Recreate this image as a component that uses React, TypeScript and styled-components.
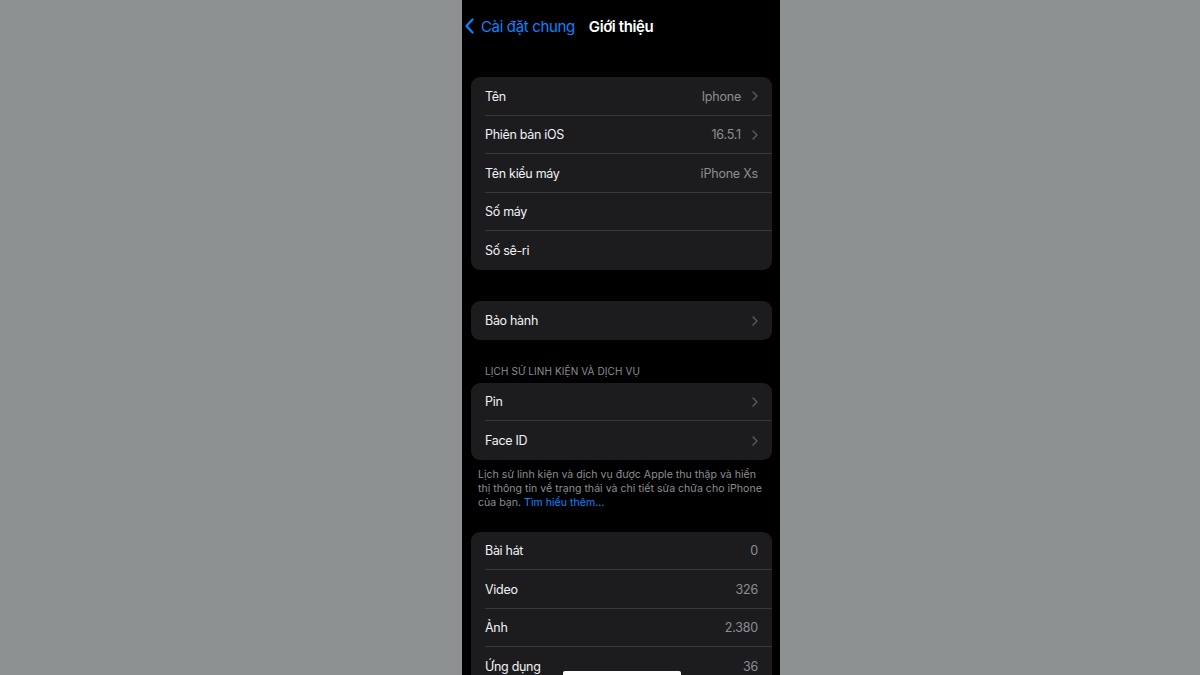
import React from "react";
import styled, { createGlobalStyle } from "styled-components";

interface Row {
    label: string;
    value?: string;
    chevron?: boolean;
}

const GlobalStyle = createGlobalStyle`
    html, body {
        margin: 0;
        padding: 0;
        background: #8e9192;
        font-family: Inter, "Noto Sans", "DejaVu Sans", sans-serif;
        -webkit-font-smoothing: antialiased;
    }
`;

const Page = styled.div`
    width: 1200px;
    height: 675px;
    display: flex;
    padding-left: 462px;
    box-sizing: border-box;
    overflow: hidden;
`;

const Screen = styled.div`
    position: relative;
    width: 318px;
    height: 675px;
    background: #000;
    display: flex;
    flex-direction: column;
    padding: 0 8px 0 9px;
    box-sizing: border-box;
    overflow: hidden;

    & > * {
        flex-shrink: 0;
    }
`;

const NavBar = styled.div`
    height: 52px;
    display: flex;
    align-items: center;
    margin-left: -6px;
    margin-bottom: 25px;
`;

const BackButton = styled.div`
    display: flex;
    align-items: center;
    gap: 7px;
    color: #0a84ff;
    font-size: 15px;
    letter-spacing: -0.35px;

    svg {
        width: 9px;
        height: 16px;
    }
`;

const NavTitle = styled.div`
    margin-left: 14px;
    color: #fff;
    font-size: 15px;
    font-weight: 600;
    letter-spacing: -0.4px;
`;

const Card = styled.div`
    background: #1c1c1e;
    border-radius: 9px;
`;

const RowItem = styled.div<{ $last?: boolean }>`
    height: 38.5px;
    display: flex;
    align-items: center;
    margin-left: 14px;
    padding: 1px 14px 0 0;
    box-sizing: border-box;
    border-bottom: ${(p) => (p.$last ? "none" : "0.5px solid #38383a")};
`;

const Label = styled.span`
    flex: 1;
    color: #f2f2f4;
    font-size: 12.5px;
    letter-spacing: -0.3px;
`;

const Value = styled.span`
    color: #8e8e93;
    font-size: 12.5px;
    letter-spacing: -0.2px;
`;

const Chevron = styled.svg`
    width: 6px;
    height: 10px;
    margin-left: 11px;
`;

const Gap = styled.div<{ $h: number }>`
    height: ${(p) => p.$h}px;
`;

const SectionHeader = styled.div`
    padding: 25px 0 6px 14px;
    color: #8d8d93;
    font-size: 10px;
    letter-spacing: 0.1px;
    line-height: 12px;
    text-transform: uppercase;
`;

const SectionFooter = styled.div`
    padding: 8px 10px 0 7px;
    color: #8d8d93;
    font-size: 10.6px;
    line-height: 14px;
    height: 72px;
    box-sizing: border-box;
`;

const LearnMore = styled.span`
    color: #0a84ff;
`;

const HomeIndicator = styled.div`
    position: absolute;
    left: 101px;
    bottom: 0;
    width: 118px;
    height: 4px;
    border-radius: 2px 2px 0 0;
    background: #fff;
`;

const info: Row[] = [
    { label: "Tên", value: "Iphone", chevron: true },
    { label: "Phiên bản iOS", value: "16.5.1", chevron: true },
    { label: "Tên kiểu máy", value: "iPhone Xs" },
    { label: "Số máy" },
    { label: "Số sê-ri" },
];

const warranty: Row[] = [{ label: "Bảo hành", chevron: true }];

const parts: Row[] = [
    { label: "Pin", chevron: true },
    { label: "Face ID", chevron: true },
];

const media: Row[] = [
    { label: "Bài hát", value: "0" },
    { label: "Video", value: "326" },
    { label: "Ảnh", value: "2.380" },
    { label: "Ứng dụng", value: "36" },
];

function Group({ rows }: { rows: Row[] }) {
    return (
        <Card>
            {rows.map((row, i) => (
                <RowItem key={row.label} $last={i === rows.length - 1}>
                    <Label>{row.label}</Label>
                    {row.value && <Value>{row.value}</Value>}
                    {row.chevron && (
                        <Chevron viewBox="0 0 6 10">
                            <path
                                d="M1 1l4 4-4 4"
                                fill="none"
                                stroke="#5b5b60"
                                strokeWidth="1.4"
                                strokeLinecap="round"
                                strokeLinejoin="round"
                            />
                        </Chevron>
                    )}
                </RowItem>
            ))}
        </Card>
    );
}

function App() {
    return (
        <Page>
            <GlobalStyle />
            <Screen>
                <NavBar>
                    <BackButton>
                        <svg viewBox="0 0 9 16">
                            <path
                                d="M7.5 1.5L1.5 8l6 6.5"
                                fill="none"
                                stroke="#0a84ff"
                                strokeWidth="2.2"
                                strokeLinecap="round"
                                strokeLinejoin="round"
                            />
                        </svg>
                        Cài đặt chung
                    </BackButton>
                    <NavTitle>Giới thiệu</NavTitle>
                </NavBar>
                <Group rows={info} />
                <Gap $h={31.5} />
                <Group rows={warranty} />
                <SectionHeader>Lịch sử linh kiện và dịch vụ</SectionHeader>
                <Group rows={parts} />
                <SectionFooter>
                    Lịch sử linh kiện và dịch vụ được Apple thu thập và hiển
                    thị thông tin về trạng thái và chi tiết sửa chữa cho iPhone
                    của bạn. <LearnMore>Tìm hiểu thêm...</LearnMore>
                </SectionFooter>
                <Group rows={media} />
                <HomeIndicator />
            </Screen>
        </Page>
    );
}

export default App;
